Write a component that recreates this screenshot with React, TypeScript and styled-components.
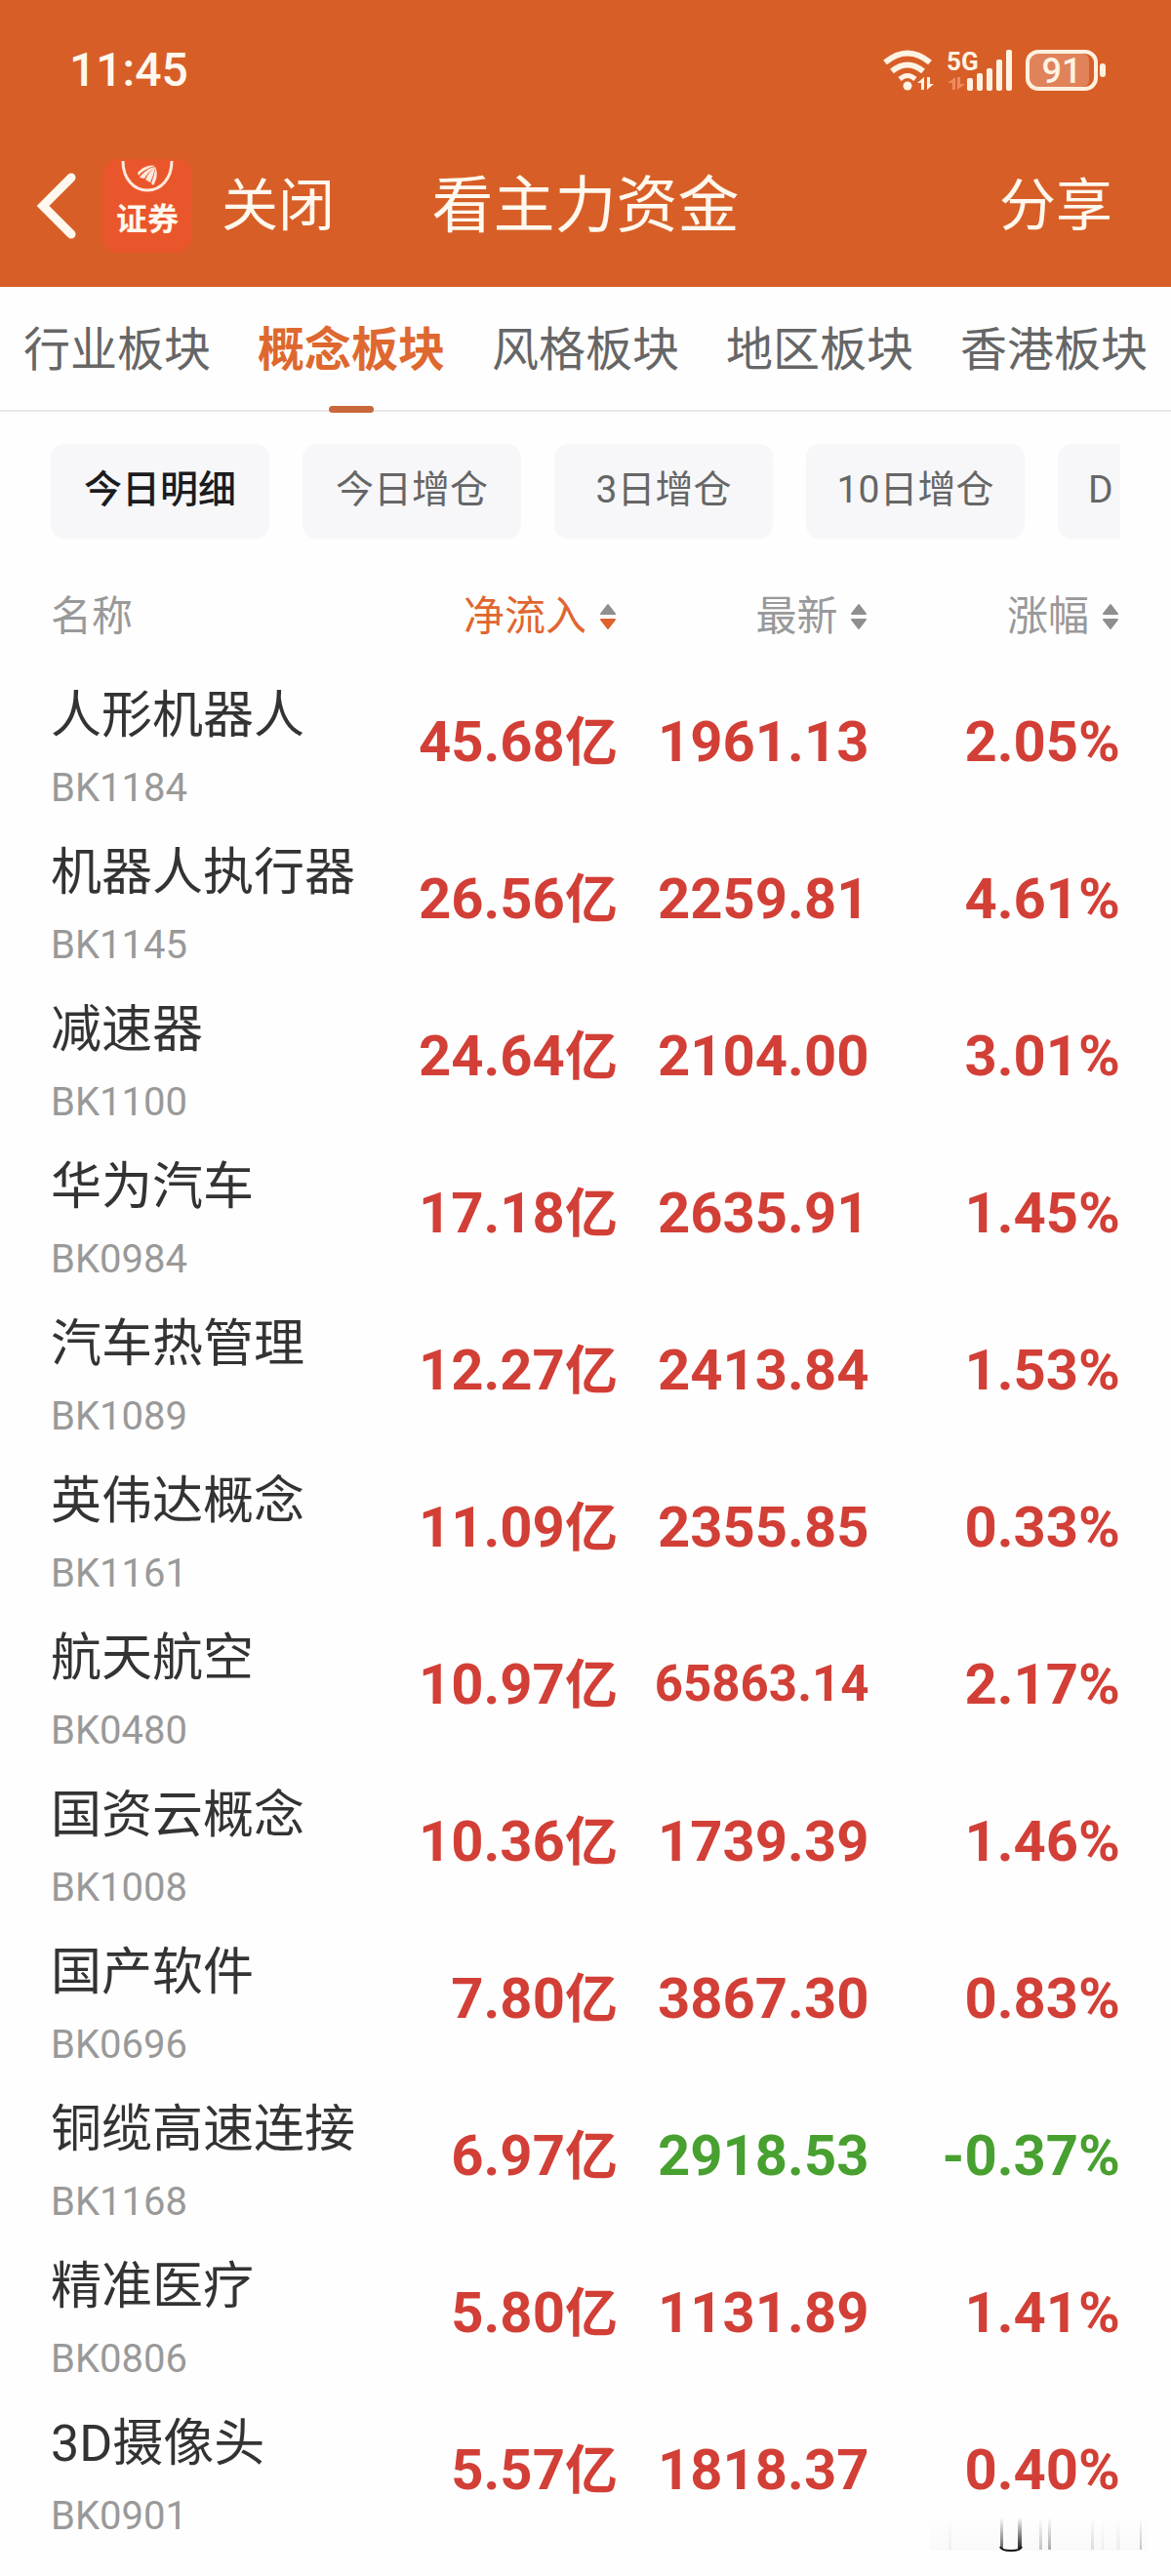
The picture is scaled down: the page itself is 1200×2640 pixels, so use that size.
import React, { useState } from "react";
import styled, { createGlobalStyle } from "styled-components";

const GlobalStyle = createGlobalStyle`
  * { box-sizing: border-box; }
  body { margin: 0; background: #fefefe; }
  body, button { font-family: Roboto, "Noto Sans CJK SC", sans-serif; }
  button { border: 0; padding: 0; background: none; color: inherit; cursor: pointer; }
`;

const Page = styled.div`
  position: relative;
  min-height: 100vh;
  overflow: hidden;
  color: #333;
`;

const Header = styled.header`
  background: #d75f27;
  color: #fff8ee;
`;

const StatusBar = styled.div`
  display: flex;
  align-items: center;
  justify-content: space-between;
  height: 144px;
  padding: 0 66px 0 71px;
`;

const Clock = styled.time`
  font-size: 48px;
  font-weight: 500;
  line-height: 56px;
`;

const StatusIcons = styled.div`
  display: flex;
  align-items: center;
  gap: 12px;

  svg {
    overflow: visible;
  }
`;

const NavBar = styled.div`
  display: grid;
  grid-template-columns: 1fr auto 1fr;
  align-items: center;
  height: 150px;
  padding: 0 36px 16px;
`;

const NavLeft = styled.div`
  display: flex;
  align-items: center;
`;

const BackButton = styled.button`
  display: flex;
  margin-right: 26px;
`;

const AppBadge = styled.div`
  display: flex;
  flex-direction: column;
  align-items: center;
  width: 92px;
  height: 96px;
  margin-right: 30px;
  border-radius: 16px;
  background: #ea562b;
  font-size: 32px;
  font-weight: 700;
  line-height: 48px;
`;

const NavButton = styled.button`
  font-size: 58px;
  line-height: 84px;
`;

const NavAction = styled(NavButton)`
  justify-self: end;
  padding-right: 24px;
`;

const Title = styled.h1`
  margin: 0;
  font-size: 63px;
  font-weight: 400;
  line-height: 90px;
`;

const TabBar = styled.nav`
  display: grid;
  grid-template-columns: repeat(5, 1fr);
  height: 128px;
  border-bottom: 2px solid #e8e8e8;
`;

const Tab = styled.button<{ $active: boolean }>`
  position: relative;
  padding-top: 4px;
  font-size: 48px;
  line-height: 72px;
  white-space: nowrap;
  color: ${(p) => (p.$active ? "#de682f" : "#666")};
  font-weight: ${(p) => (p.$active ? 700 : 400)};

  &::after {
    content: "";
    display: ${(p) => (p.$active ? "block" : "none")};
    position: absolute;
    bottom: -3px;
    left: 50%;
    width: 46px;
    height: 7px;
    margin-left: -23px;
    border-radius: 4px;
    background: #c9683a;
  }
`;

const Content = styled.main`
  padding: 33px 52px 0;
`;

const Chips = styled.div`
  display: flex;
  gap: 34px;
  overflow: hidden;
`;

const Chip = styled.button<{ $active: boolean; $partial: boolean }>`
  flex: none;
  min-width: 224px;
  height: 97px;
  padding: 0 31px 4px;
  border-radius: 14px;
  background: #f7f7f9;
  font-size: 39px;
  line-height: 56px;
  text-align: ${(p) => (p.$partial ? "left" : "center")};
  white-space: nowrap;
  color: ${(p) => (p.$active ? "#1c1c1e" : "#666")};
  font-weight: ${(p) => (p.$active ? 500 : 400)};
`;

const Table = styled.table`
  width: 100%;
  margin-top: 32px;
  border-collapse: collapse;
  table-layout: fixed;
`;

const HeadCell = styled.th<{ $width?: string }>`
  width: ${(p) => p.$width ?? "auto"};
  height: 112px;
  padding: 18px 0 0;
  vertical-align: top;
  color: #999;
  font-size: 42px;
  font-weight: 400;
  line-height: 60px;
  text-align: left;
`;

const SortButton = styled.button<{ $active: boolean }>`
  display: flex;
  align-items: center;
  gap: 14px;
  margin-left: auto;
  padding-right: 2px;
  font-size: 42px;
  line-height: 60px;
  color: ${(p) => (p.$active ? "#e0662f" : "#999")};
`;

const Row = styled.tr`
  height: 161px;
`;

const NameCell = styled.td`
  padding: 0;
  vertical-align: top;
  white-space: nowrap;
`;

const Name = styled.div`
  font-size: 52px;
  line-height: 76px;
`;

const Code = styled.div`
  font-size: 40px;
  line-height: 72px;
  color: #999;
`;

const ValueCell = styled.td<{ $down?: boolean; $small?: boolean }>`
  padding: 26px 0 0;
  vertical-align: top;
  text-align: right;
  white-space: nowrap;
  font-size: ${(p) => (p.$small ? 51 : 58)}px;
  font-weight: 700;
  line-height: 76px;
  color: ${(p) => (p.$down ? "#47a02f" : "#d23f36")};
`;

const Unit = styled.span`
  font-size: 54px;
`;

const Smudge = styled.svg`
  position: absolute;
  right: 24px;
  bottom: 24px;
`;

const WifiIcon = () => (
  <svg width="54" height="42" viewBox="0 0 54 42" fill="none" stroke="#fff3e4">
    <path d="M2 13Q25 -6 48 13" strokeWidth="6" />
    <path d="M9 22Q25 9 41 22" strokeWidth="6" />
    <path d="M17 30Q25 23 33 30" strokeWidth="5" />
    <circle cx="25" cy="37" r="4.5" fill="#fff3e4" stroke="none" />
    <path d="M42 28v13h-3v-7h-4zM45 41V28h3v7h4z" fill="#fff3e4" stroke="none" />
  </svg>
);

const SignalIcon = () => (
  <svg width="68" height="42" viewBox="0 0 68 42" fill="#fff3e4">
    <text x="-1" y="21" fontFamily="Roboto, sans-serif" fontSize="26" fontWeight="700">5G</text>
    <path d="M8 28v13H5v-7H0zM10 41V28h3v7h5z" fill="#ee8a60" />
    <rect x="20" y="29" width="6" height="13" rx="2" />
    <rect x="30" y="24" width="6" height="18" rx="2" />
    <rect x="40" y="19" width="6" height="23" rx="2" />
    <rect x="50" y="10" width="6" height="32" rx="2" />
    <rect x="60" y="0" width="6" height="42" rx="2" />
  </svg>
);

const BatteryIcon = () => (
  <svg width="83" height="42" viewBox="0 0 83 42">
    <rect x="4" y="4" width="61" height="34" rx="7" fill="#e0835b" />
    <rect x="2" y="2" width="70" height="38" rx="11" fill="none" stroke="#fff0df" strokeWidth="4" />
    <rect x="76" y="14" width="6" height="14" rx="3" fill="#fff0df" />
    <text x="37" y="34" textAnchor="middle" fontFamily="Roboto, sans-serif" fontSize="36" fontWeight="500" fill="#fff3e4">91</text>
  </svg>
);

const BackIcon = () => (
  <svg width="43" height="70" viewBox="0 0 43 70" fill="none" stroke="#fff8ee" strokeWidth="9" strokeLinecap="round" strokeLinejoin="miter">
    <path d="M37 6 8 35l29 29" />
  </svg>
);

const BadgeMark = () => (
  <svg width="56" height="38" viewBox="0 0 56 38" fill="none">
    <path d="M3 2C3 20 14 32 28 32S53 20 53 2" stroke="#ffe9dd" strokeWidth="3" />
    <g fill="#ffe9dd">
      <path d="M18 14C23 8 31 5 36 7C29 9 23 12 19 17Z" />
      <path d="M20 19C24 13 30 9 36 8C31 12 27 16 25 20Z" />
      <path d="M26 21C29 15 32 11 36 8C35 14 33 19 31 24Z" />
      <path d="M32 25C34 19 36 13 36 8C39 14 38 21 34 27Z" />
    </g>
  </svg>
);

const SortIcon = ({ active }: { active: boolean }) => (
  <svg width="16" height="28" viewBox="0 0 16 28" strokeLinejoin="round" strokeWidth="2">
    <path d="M8 2 15 11H1Z" fill="#8f8f8f" stroke="#8f8f8f" />
    <path d="M8 26 1 17H15Z" fill={active ? "#e0612c" : "#8f8f8f"} stroke={active ? "#e0612c" : "#8f8f8f"} />
  </svg>
);

const streaks = [
  { x: 19, width: 3, opacity: 0.05 },
  { x: 112, width: 3, opacity: 0.22 },
  { x: 121, width: 3, opacity: 0.32 },
  { x: 165, width: 3, opacity: 0.12 },
  { x: 176, width: 2, opacity: 0.05 },
  { x: 191, width: 4, opacity: 0.05 },
  { x: 215, width: 2, opacity: 0.22 },
];

const FadedMark = () => (
  <Smudge width="223" height="38" viewBox="0 0 223 38" aria-hidden="true">
    <defs>
      <linearGradient id="fade" x1="0" y1="0" x2="0" y2="1">
        <stop offset="0" stopColor="#000" stopOpacity="0" />
        <stop offset="1" stopColor="#000" />
      </linearGradient>
      <linearGradient id="band" x1="0" y1="0" x2="0" y2="1">
        <stop offset="0" stopColor="#000" stopOpacity="0" />
        <stop offset="1" stopColor="#000" stopOpacity="0.02" />
      </linearGradient>
    </defs>
    <rect width="223" height="36" fill="url(#band)" />
    {streaks.map((s) => (
      <rect key={s.x} x={s.x} y="2" width={s.width} height="33" fill="url(#fade)" opacity={s.opacity} />
    ))}
    <rect x="72" y="2" width="3" height="32" fill="url(#fade)" opacity="0.6" />
    <rect x="90" y="2" width="4" height="32" fill="url(#fade)" opacity="0.85" />
    <path d="M72 32Q73 36 83 36T94 32" fill="none" stroke="#111" strokeWidth="2" />
  </Smudge>
);

const tabs = ["行业板块", "概念板块", "风格板块", "地区板块", "香港板块"];
const chips = ["今日明细", "今日增仓", "3日增仓", "10日增仓", "D"];
const columns = [
  { label: "净流入", width: "22%" },
  { label: "最新", width: "23.5%" },
  { label: "涨幅", width: "23.5%" },
];

const rows = [
  { name: "人形机器人", code: "BK1184", inflow: "45.68", last: "1961.13", change: "2.05%" },
  { name: "机器人执行器", code: "BK1145", inflow: "26.56", last: "2259.81", change: "4.61%" },
  { name: "减速器", code: "BK1100", inflow: "24.64", last: "2104.00", change: "3.01%" },
  { name: "华为汽车", code: "BK0984", inflow: "17.18", last: "2635.91", change: "1.45%" },
  { name: "汽车热管理", code: "BK1089", inflow: "12.27", last: "2413.84", change: "1.53%" },
  { name: "英伟达概念", code: "BK1161", inflow: "11.09", last: "2355.85", change: "0.33%" },
  { name: "航天航空", code: "BK0480", inflow: "10.97", last: "65863.14", change: "2.17%" },
  { name: "国资云概念", code: "BK1008", inflow: "10.36", last: "1739.39", change: "1.46%" },
  { name: "国产软件", code: "BK0696", inflow: "7.80", last: "3867.30", change: "0.83%" },
  { name: "铜缆高速连接", code: "BK1168", inflow: "6.97", last: "2918.53", change: "-0.37%" },
  { name: "精准医疗", code: "BK0806", inflow: "5.80", last: "1131.89", change: "1.41%" },
  { name: "3D摄像头", code: "BK0901", inflow: "5.57", last: "1818.37", change: "0.40%" },
];

export default function App() {
  const [tab, setTab] = useState(1);
  const [chip, setChip] = useState(0);
  const [sort, setSort] = useState(0);

  return (
    <Page>
      <GlobalStyle />
      <Header>
        <StatusBar>
          <Clock>11:45</Clock>
          <StatusIcons>
            <WifiIcon />
            <SignalIcon />
            <BatteryIcon />
          </StatusIcons>
        </StatusBar>
        <NavBar>
          <NavLeft>
            <BackButton aria-label="返回"><BackIcon /></BackButton>
            <AppBadge><BadgeMark />证券</AppBadge>
            <NavButton>关闭</NavButton>
          </NavLeft>
          <Title>看主力资金</Title>
          <NavAction>分享</NavAction>
        </NavBar>
      </Header>
      <TabBar>
        {tabs.map((label, i) => (
          <Tab key={label} $active={i === tab} onClick={() => setTab(i)}>{label}</Tab>
        ))}
      </TabBar>
      <Content>
        <Chips>
          {chips.map((label, i) => (
            <Chip key={label} $active={i === chip} $partial={i === chips.length - 1} onClick={() => setChip(i)}>
              {label}
            </Chip>
          ))}
        </Chips>
        <Table>
          <thead>
            <tr>
              <HeadCell>名称</HeadCell>
              {columns.map((column, i) => (
                <HeadCell key={column.label} $width={column.width}>
                  <SortButton $active={i === sort} onClick={() => setSort(i)}>
                    {column.label}
                    <SortIcon active={i === sort} />
                  </SortButton>
                </HeadCell>
              ))}
            </tr>
          </thead>
          <tbody>
            {rows.map((row) => {
              const down = row.change.startsWith("-");
              return (
                <Row key={row.code}>
                  <NameCell>
                    <Name>{row.name}</Name>
                    <Code>{row.code}</Code>
                  </NameCell>
                  <ValueCell>{row.inflow}<Unit>亿</Unit></ValueCell>
                  <ValueCell $down={down} $small={row.last.length > 7}>{row.last}</ValueCell>
                  <ValueCell $down={down}>{row.change}</ValueCell>
                </Row>
              );
            })}
          </tbody>
        </Table>
      </Content>
      <FadedMark />
    </Page>
  );
}
